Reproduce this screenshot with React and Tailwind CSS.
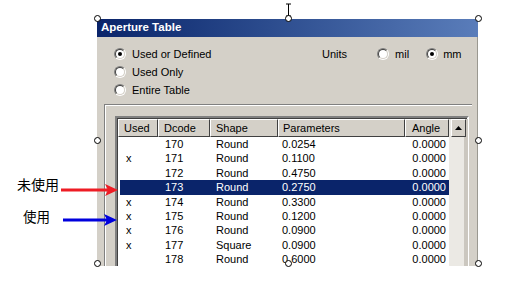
import React from "react";

const rows = [
  { used: "", dcode: "170", shape: "Round", param: "0.0254", angle: "0.0000" },
  { used: "x", dcode: "171", shape: "Round", param: "0.1100", angle: "0.0000" },
  { used: "", dcode: "172", shape: "Round", param: "0.4750", angle: "0.0000" },
  { used: "", dcode: "173", shape: "Round", param: "0.2750", angle: "0.0000", selected: true },
  { used: "x", dcode: "174", shape: "Round", param: "0.3300", angle: "0.0000" },
  { used: "x", dcode: "175", shape: "Round", param: "0.1200", angle: "0.0000" },
  { used: "x", dcode: "176", shape: "Round", param: "0.0900", angle: "0.0000" },
  { used: "x", dcode: "177", shape: "Square", param: "0.0900", angle: "0.0000" },
  { used: "", dcode: "178", shape: "Round", param: "0.6000", angle: "0.0000" },
];

const handles = [
  [97, 18], [288, 18], [478, 18],
  [97, 140], [478, 140],
  [97, 263], [288, 263], [478, 263],
];

const Radio = ({ checked }) => (
  <div className="w-[12px] h-[12px] rounded-full border border-t-[#808080] border-l-[#808080] border-b-white border-r-white shrink-0">
    <div className="w-full h-full rounded-full border border-t-[#404040] border-l-[#404040] border-b-[#d4d0c8] border-r-[#d4d0c8] bg-white flex items-center justify-center">
      {checked && <div className="w-[4px] h-[4px] rounded-full bg-black"></div>}
    </div>
  </div>
);

const HeaderCell = ({ label, className }) => (
  <div
    className={`h-full border-t border-l border-t-white border-l-white border-b border-r border-b-[#404040] border-r-[#404040] flex items-center pl-[5px] ${className}`}
  >
    {label}
  </div>
);

export default function App() {
  return (
    <div className="relative w-[512px] h-[293px] bg-white overflow-hidden pt-[19px] font-['Liberation_Sans',Arial,sans-serif] text-[11px] text-black">
      {/* Dialog window */}
      <div className="ml-[97px] w-[381px] h-[247px] flex flex-col overflow-hidden">
        <div className="h-[18px] bg-linear-to-r from-[#0a246a] to-[#5a7dba] text-white font-bold text-[11.5px] pl-[4px] flex items-center shrink-0">
          Aperture Table
        </div>

        <div className="flex-1 bg-[#d4d0c8] border-r border-[#9a9890] overflow-hidden">
          {/* Options */}
          <div className="h-[67px] flex">
            <div className="w-[225px] pl-[17px] pt-[8px] flex flex-col">
              <div className="h-[18px] flex items-center gap-[6px]">
                <Radio checked />
                <span>Used or Defined</span>
              </div>
              <div className="h-[18px] flex items-center gap-[6px]">
                <Radio />
                <span>Used Only</span>
              </div>
              <div className="h-[18px] flex items-center gap-[6px]">
                <Radio />
                <span>Entire Table</span>
              </div>
            </div>
            <div className="pt-[8px]">
              <div className="h-[18px] flex items-center">
                <span>Units</span>
                <div className="ml-[30px] flex items-center gap-[6px]">
                  <Radio />
                  <span>mil</span>
                </div>
                <div className="ml-[17px] flex items-center gap-[5px]">
                  <Radio checked />
                  <span>mm</span>
                </div>
              </div>
            </div>
          </div>

          {/* Frame with list */}
          <div className="ml-[7px] w-[368px] border-t border-l border-[#808080]">
            <div className="border-t border-l border-white pl-[9px] pt-[10px]">
              <div className="w-[354px] border-t-2 border-l-2 border-t-[#808080] border-l-[#808080] border-r-2 border-r-white">
                <div className="border-t border-l border-[#404040] flex bg-white">
                  {/* Table */}
                  <div className="w-[331px]">
                    <div className="h-[18px] flex bg-[#d4d0c8]">
                      <HeaderCell label="Used" className="w-[40px]" />
                      <HeaderCell label="Dcode" className="w-[52px]" />
                      <HeaderCell label="Shape" className="w-[68px]" />
                      <HeaderCell label="Parameters" className="w-[127px] !pl-[4px]" />
                      <HeaderCell label="Angle" className="w-[44px] !pl-[6px]" />
                    </div>
                    <div>
                      {rows.map((r) => (
                        <div
                          key={r.dcode}
                          className={`h-[14.4px] flex items-center ${
                            r.selected ? "bg-[#0a246a] text-white ml-[2px]" : ""
                          }`}
                        >
                          <div className={`${r.selected ? "w-[38px] pl-[6px]" : "w-[40px] pl-[8px]"}`}>{r.used}</div>
                          <div className="w-[52px] pl-[7px]">{r.dcode}</div>
                          <div className="w-[68px] pl-[6px]">{r.shape}</div>
                          <div className="w-[127px] pl-[4px]">{r.param}</div>
                          <div className="w-[44px] pr-[3px] text-right">{r.angle}</div>
                        </div>
                      ))}
                    </div>
                  </div>
                  {/* Scrollbar */}
                  <div className="w-[19px] flex flex-col bg-[#ebe9e4] border-r-4 border-[#cbc7bf]">
                    <div className="h-[18px] w-[15px] ml-[2px] bg-[#d4d0c8] border-t border-l border-t-white border-l-white border-b border-r border-b-[#404040] border-r-[#404040] flex items-center justify-center">
                      <svg width="7" height="4" viewBox="0 0 7 4">
                        <path d="M3.5 0L7 4H0z" fill="#000" />
                      </svg>
                    </div>
                    <div className="h-[150px]"></div>
                  </div>
                </div>
              </div>
            </div>
          </div>
        </div>
      </div>

      {/* Annotations */}
      <span className="absolute left-[17px] top-[176px] text-[14px] leading-[16px] font-['Noto_Sans_CJK_SC',sans-serif]">
        未使用
      </span>
      <span className="absolute left-[23px] top-[208px] text-[13.5px] leading-[16px] font-['Noto_Sans_CJK_SC',sans-serif]">
        使用
      </span>
      <svg className="absolute left-[60px] top-[183px]" width="60" height="14" viewBox="0 0 60 14">
        <path d="M1 7H48" stroke="#ee1c24" strokeWidth="3" />
        <path d="M45 1L58 7L45 13L48 7z" fill="#ee1c24" />
      </svg>
      <svg className="absolute left-[62px] top-[213px]" width="58" height="14" viewBox="0 0 58 14">
        <path d="M1 7H45" stroke="#0000dd" strokeWidth="3" />
        <path d="M42 1L55 7L42 13L45 7z" fill="#0000dd" />
      </svg>

      {/* I-beam cursor */}
      <svg className="absolute left-[284px] top-[3px]" width="9" height="14" viewBox="0 0 9 14">
        <path d="M2 1H7M4.5 1V13M2 13H7" stroke="#000" strokeWidth="1" fill="none" />
      </svg>

      {/* Selection handles */}
      {handles.map(([x, y]) => (
        <div
          key={`${x}-${y}`}
          className="absolute w-[7px] h-[7px] rounded-full border border-black bg-white"
          style={{ left: x - 3.5, top: y - 3.5 }}
        ></div>
      ))}
    </div>
  );
}
